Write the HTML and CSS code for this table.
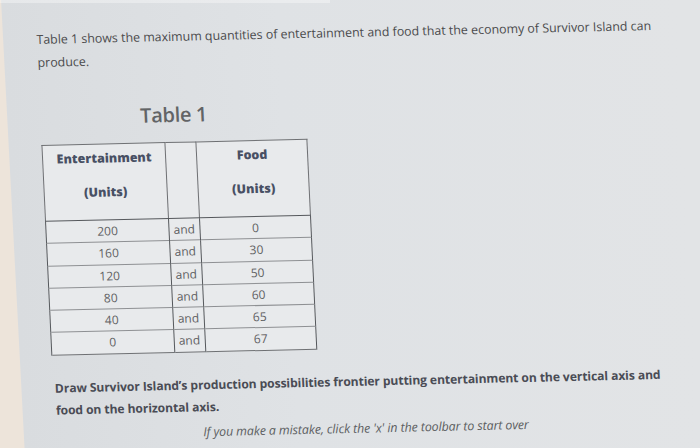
FILE: index.html
```html
<!DOCTYPE html>
<html lang="en">
<head>
<meta charset="utf-8">
<title>Survivor Island</title>
<link rel="stylesheet" href="styles.css">
</head>
<body>
<main class="page">
  <p class="intro">Table 1 shows the maximum quantities of entertainment and food that the economy of Survivor Island can produce.</p>
  <h2 class="caption">Table 1</h2>
  <table class="ppf">
    <colgroup>
      <col class="c-ent">
      <col class="c-and">
      <col class="c-food">
    </colgroup>
    <thead>
      <tr>
        <th><div class="h1">Entertainment</div><div class="h2">(Units)</div></th>
        <th></th>
        <th><div class="h1">Food</div><div class="h2">(Units)</div></th>
      </tr>
    </thead>
    <tbody>
      <tr><td>200</td><td class="and">and</td><td>0</td></tr>
      <tr><td>160</td><td class="and">and</td><td>30</td></tr>
      <tr><td>120</td><td class="and">and</td><td>50</td></tr>
      <tr><td>80</td><td class="and">and</td><td>60</td></tr>
      <tr><td>40</td><td class="and">and</td><td>65</td></tr>
      <tr><td>0</td><td class="and">and</td><td>67</td></tr>
    </tbody>
  </table>
  <p class="task">Draw Survivor Island’s production possibilities frontier putting entertainment on the vertical axis and food on the horizontal axis.</p>
  <p class="hint">If you make a mistake, click the 'x' in the toolbar to start over</p>
</main>
</body>
</html>
```

FILE: styles.css
```css
html, body {
  margin: 0;
  padding: 0;
  height: 100%;
  overflow: hidden;
}
body {
  width: 700px;
  height: 448px;
  background:
    linear-gradient(180deg, rgba(255,255,255,0.35) 0, rgba(255,255,255,0.35) 3px, rgba(255,255,255,0) 3px) 0 0 / 330px 3px no-repeat,
    linear-gradient(87deg, #ede4da 0, #ede4da 24px, #d9dcdf 25px, #dfe2e5 300px, #e2e4e6 700px);
  font-family: "Open Sans", "Noto Sans", sans-serif;
  color: #4b4b4d;
}
.page {
  width: 630px;
  padding: 28px 0 0 36px;
  transform-origin: 36px 30px;
  transform: rotate(-1.3deg) skewX(1.4deg);
}
.intro {
  margin: 0;
  font-size: 12.4px;
  line-height: 23px;
  width: 625px;
}
.caption {
  margin: 30px 0 0 100px;
  font-size: 20px;
  font-weight: 600;
  line-height: 28px;
  color: #626466;
  letter-spacing: -0.3px;
}
.ppf {
  margin-top: 13px;
  border-collapse: collapse;
  width: 265px;
  table-layout: fixed;
  background: #e8eaec;
  border: 1px solid #6e7073;
}
.c-ent { width: 123px; }
.c-and { width: 31px; }
.c-food { width: 111px; }
.ppf th {
  height: 75px;
  padding: 0;
  vertical-align: top;
  border: 1px solid #6e7073;
  border-bottom-color: #55585c;
  color: #485064;
  font-size: 12.5px;
  font-weight: 800;
  line-height: 18px;
}
.ppf th .h1 { margin-top: 5px; }
.ppf th .h2 { margin-top: 16px; }
.ppf td {
  padding: 0;
  line-height: 21.3px;
  text-align: center;
  font-size: 12px;
  color: #5f6163;
  border-top: 1px solid #8e9093;
  border-left: 1px solid #55585c;
  border-right: 1px solid #55585c;
}
.ppf td.and {
  text-align: left;
  padding-left: 4px;
}
.task {
  margin: 22px 0 0 2px;
  width: 620px;
  font-size: 12.15px;
  font-weight: 700;
  line-height: 22px;
  color: #4a4c55;
  letter-spacing: -0.1px;
}
.hint {
  margin: 5px 0 0 0;
  width: 622px;
  text-align: center;
  font-size: 12.4px;
  font-style: italic;
  color: #5c5e61;
  letter-spacing: -0.1px;
}
```
